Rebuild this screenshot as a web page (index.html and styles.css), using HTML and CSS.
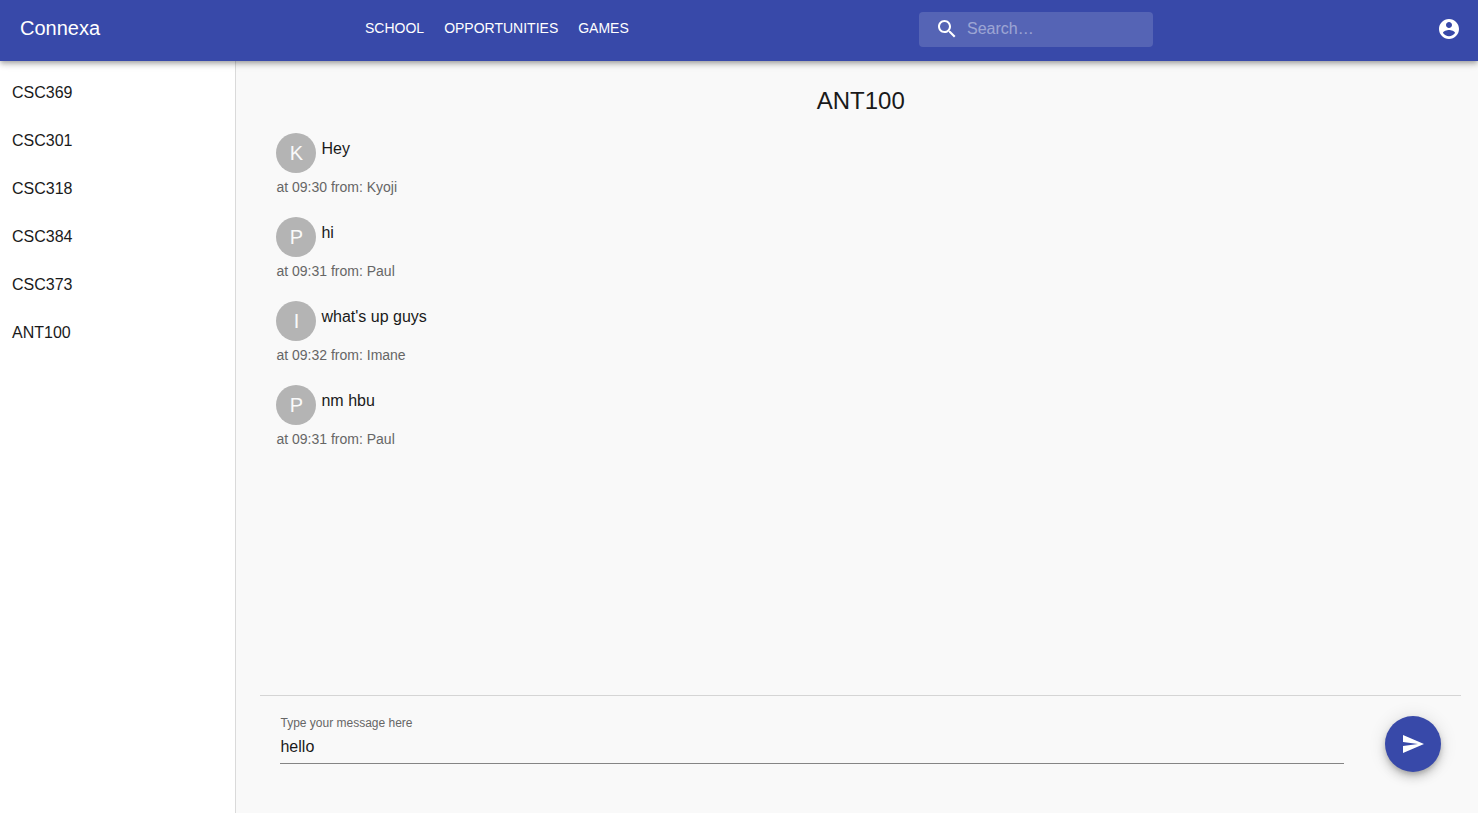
FILE: index.html
```html
<!DOCTYPE html>
<html lang="en">
<head>
    <meta charset="utf-8">
    <title>Connexa</title>
    <link rel="stylesheet" href="styles.css">
</head>
<body>
    <header class="app-bar">
        <h1 class="brand">Connexa</h1>
        <nav class="nav-links">
            <a href="#school">SCHOOL</a>
            <a href="#opportunities">OPPORTUNITIES</a>
            <a href="#games">GAMES</a>
        </nav>
        <div class="tools">
            <label class="search">
                <svg class="icon" viewBox="0 0 24 24" aria-hidden="true">
                    <path d="M15.5 14h-.79l-.28-.27C15.41 12.59 16 11.11 16 9.5 16 5.91 13.09 3 9.5 3S3 5.91 3 9.5 5.91 16 9.5 16c1.61 0 3.09-.59 4.23-1.57l.27.28v.79l5 4.99L20.49 19l-4.99-5zm-6 0C7.01 14 5 11.99 5 9.5S7.01 5 9.5 5 14 7.01 14 9.5 11.99 14 9.5 14z"/>
                </svg>
                <input type="text" placeholder="Search…" aria-label="Search">
            </label>
            <button class="account" type="button" aria-label="Account">
                <svg class="icon" viewBox="0 0 24 24" aria-hidden="true">
                    <path d="M12 2C6.48 2 2 6.48 2 12s4.48 10 10 10 10-4.48 10-10S17.52 2 12 2zm0 3c1.66 0 3 1.34 3 3s-1.34 3-3 3-3-1.34-3-3 1.34-3 3-3zm0 14.2c-2.5 0-4.71-1.28-6-3.22.03-1.99 4-3.08 6-3.08 1.99 0 5.97 1.09 6 3.08-1.29 1.94-3.5 3.22-6 3.22z"/>
                </svg>
            </button>
        </div>
    </header>

    <div class="layout">
        <aside class="sidebar">
            <a href="#csc369">CSC369</a>
            <a href="#csc301">CSC301</a>
            <a href="#csc318">CSC318</a>
            <a href="#csc384">CSC384</a>
            <a href="#csc373">CSC373</a>
            <a href="#ant100">ANT100</a>
        </aside>

        <main class="chat">
            <h2 class="chat-title">ANT100</h2>

            <ul class="messages">
                <li class="message">
                    <div class="message-row">
                        <span class="avatar">K</span>
                        <p class="message-text">Hey</p>
                    </div>
                    <p class="message-meta">at 09:30 from: Kyoji</p>
                </li>
                <li class="message">
                    <div class="message-row">
                        <span class="avatar">P</span>
                        <p class="message-text">hi</p>
                    </div>
                    <p class="message-meta">at 09:31 from: Paul</p>
                </li>
                <li class="message">
                    <div class="message-row">
                        <span class="avatar">I</span>
                        <p class="message-text">what's up guys</p>
                    </div>
                    <p class="message-meta">at 09:32 from: Imane</p>
                </li>
                <li class="message">
                    <div class="message-row">
                        <span class="avatar">P</span>
                        <p class="message-text">nm hbu</p>
                    </div>
                    <p class="message-meta">at 09:31 from: Paul</p>
                </li>
            </ul>

            <form class="compose">
                <div class="field">
                    <label for="message">Type your message here</label>
                    <input type="text" id="message" value="hello">
                </div>
                <button class="send" type="button" aria-label="Send">
                    <svg class="icon" viewBox="0 0 24 24" aria-hidden="true">
                        <path d="M2.01 21L23 12 2.01 3 2 10l15 2-15 2z"/>
                    </svg>
                </button>
            </form>
        </main>
    </div>
</body>
</html>
```
FILE: styles.css
```css
* {
    box-sizing: border-box;
}
body {
    margin: 0;
    min-height: 100vh;
    display: flex;
    flex-direction: column;
    background-color: #f9f9f9;
    color: #1a1a1a;
    font-family: "Liberation Sans", Arial, sans-serif;
    font-size: 16px;
    line-height: 24px;
}
h1, h2, p, ul {
    margin: 0;
    padding: 0;
    font-weight: normal;
}
a {
    color: inherit;
    text-decoration: none;
}
button {
    border: none;
    padding: 0;
    color: white;
    cursor: pointer;
}
input {
    border: none;
    padding: 0;
    background: none;
    color: inherit;
    font: inherit;
    outline: none;
}
.icon {
    display: block;
    flex-shrink: 0;
    width: 24px;
    height: 24px;
    fill: currentColor;
}

/* top bar */
.app-bar {
    position: relative;
    z-index: 1;
    display: grid;
    grid-template-columns: 345fr 554fr 542fr;
    align-items: start;
    padding: 12px 17px 14px 20px;
    background-color: #3849a9;
    color: white;
    line-height: 32px;
    box-shadow: 0 2px 4px -1px rgba(0, 0, 0, 0.2), 0 4px 5px 0 rgba(0, 0, 0, 0.14), 0 1px 10px 0 rgba(0, 0, 0, 0.12);
}
.brand {
    font-size: 20px;
}
.nav-links {
    display: flex;
    gap: 20px;
    font-size: 14px;
}
.tools {
    display: flex;
    align-items: flex-start;
    justify-content: space-between;
}
.search {
    display: flex;
    align-items: flex-start;
    gap: 8px;
    width: 234px;
    height: 35px;
    padding: 5px 16px;
    border-radius: 4px;
    background-color: rgba(255, 255, 255, 0.15);
    line-height: 24px;
}
.search input {
    flex: 1;
    min-width: 0;
    height: 24px;
}
.search input::placeholder {
    color: white;
    opacity: 0.42;
}
.account {
    padding: 5px 0;
    background: none;
}

/* class list */
.layout {
    flex: 1;
    display: flex;
}
.sidebar {
    width: 16%;
    padding: 8px 0;
    background-color: white;
    border-right: 1px solid #dadada;
}
.sidebar a {
    display: block;
    padding: 12px;
}

/* conversation */
.chat {
    flex: 1;
    display: flex;
    flex-direction: column;
    padding: 24px 17px 21px 24px;
}
.chat-title {
    font-size: 24px;
    line-height: 32px;
    text-align: center;
}
.messages {
    flex: 1;
    padding: 16px;
    list-style: none;
}
.message {
    margin-bottom: 20px;
}
.message-row {
    display: flex;
    gap: 5px;
    margin-bottom: 4px;
}
.avatar {
    display: flex;
    align-items: center;
    justify-content: center;
    width: 40px;
    height: 40px;
    border-radius: 50%;
    background-color: #b4b4b4;
    color: #fafafa;
    font-size: 20px;
}
.message-text {
    padding-top: 4px;
}
.message-meta {
    color: #666;
    font-size: 14px;
    line-height: 20px;
}

/* message box */
.compose {
    display: flex;
    gap: 41px;
    padding: 20px;
    border-top: 1px solid #d5d5d5;
}
.field {
    flex: 1;
    display: flex;
    flex-direction: column;
    align-self: flex-start;
    border-bottom: 1px solid #858585;
}
.field label {
    color: #666;
    font-size: 12px;
    line-height: 15px;
}
.field input {
    height: 32px;
}
.send {
    display: flex;
    align-items: center;
    justify-content: center;
    width: 56px;
    height: 56px;
    border-radius: 50%;
    background-color: #3849a9;
    box-shadow: 0 3px 5px -1px rgba(0, 0, 0, 0.2), 0 6px 10px 0 rgba(0, 0, 0, 0.14), 0 1px 18px 0 rgba(0, 0, 0, 0.12);
}
```
